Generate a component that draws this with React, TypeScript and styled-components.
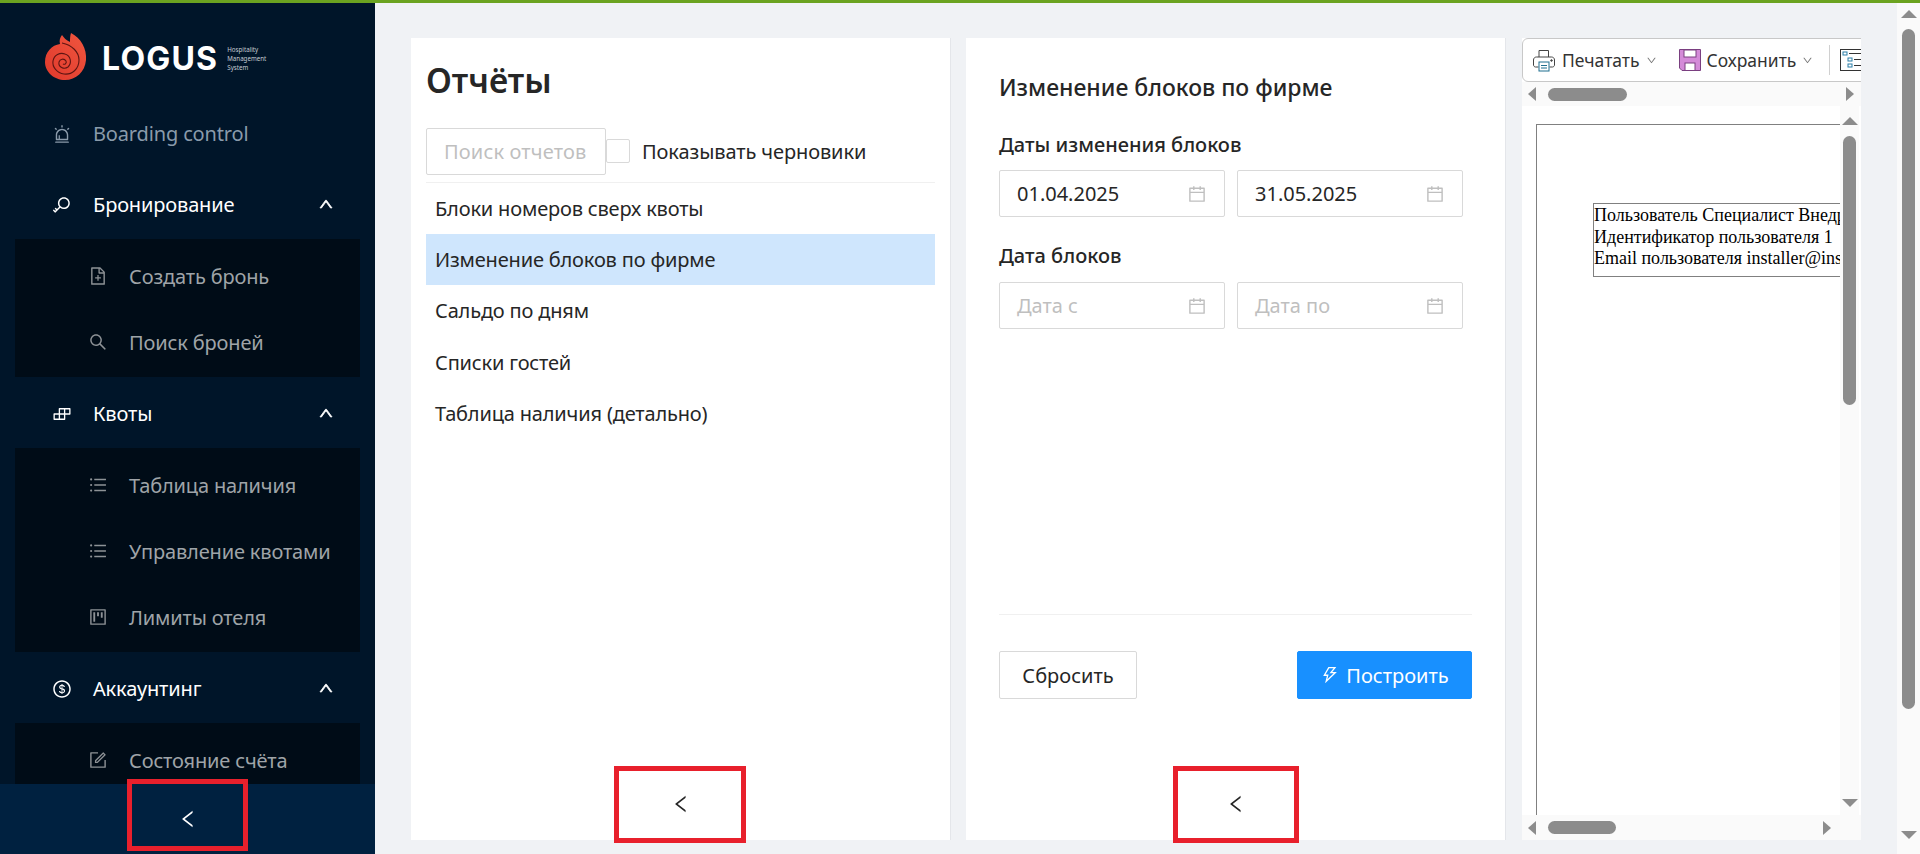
import React from 'react';
import styled, { createGlobalStyle } from 'styled-components';
import {
  AiOutlineAlert, AiOutlineKey, AiOutlineUp, AiOutlineFileAdd, AiOutlineSearch, AiOutlineBuild,
  AiOutlineUnorderedList, AiOutlineProject, AiOutlineDollar, AiOutlineForm, AiOutlineLeft,
  AiOutlineCalendar, AiOutlineThunderbolt, AiOutlineDown,
} from 'react-icons/ai';

const Global = createGlobalStyle`
  html, body { margin: 0; padding: 0; height: 100%; overflow: hidden; background: #f0f2f5; }
  * { box-sizing: border-box; }
  body { font-family: "Noto Sans", "Open Sans", Arial, sans-serif; color: #262626; }
`;

const Page = styled.div`
  width: 1920px; height: 854px; display: flex; flex-direction: column; overflow: hidden;
`;
const TopLine = styled.div`height: 3px; background: #6ba320; flex: none;`;
const Shell = styled.div`flex: 1; display: flex; min-height: 0;`;

const Sidebar = styled.aside`
  width: 375px; flex: none; background: #001529; display: flex; flex-direction: column;
`;
const SideScroll = styled.div`flex: 1; overflow: hidden; min-height: 0;`;
const LogoRow = styled.div`height: 94px; padding: 29px 0 0 45px; display: flex; align-items: flex-start;`;
const LogoWord = styled.span`
  font-family: Inter, sans-serif; font-weight: 700; font-size: 32px; line-height: 40px; color: #fff;
  margin-left: 15px; margin-top: 7px; letter-spacing: 1.2px;
`;
const LogoTag = styled.span`
  font-family: "Noto Sans", sans-serif; font-size: 6.2px; line-height: 9px; color: #c5ccd3; margin: 13px 0 0 9px;
`;
const TopRow = styled.div<{ $dim?: boolean }>`
  height: 71px; display: flex; align-items: center; padding: 2px 41px 0 52px; font-size: 20px; letter-spacing: -0.15px;
  color: ${p => (p.$dim ? '#8a9bab' : '#fff')};
  & > svg:first-child { font-size: 20px; flex: none; margin-right: 21px; }
`;
const Chevron = styled(AiOutlineUp)`margin: -2px 0 0 auto; font-size: 16px; stroke-width: 50; color: #fff;`;
const SubBlock = styled.div`margin: 0 15px; background: #000c17; padding: 4px 0 2px;`;
const SubRow = styled.div`
  height: 66px; display: flex; align-items: center; padding-left: 73px; font-size: 20px; letter-spacing: -0.15px; color: #9fa4a8;
  & > svg { font-size: 20px; flex: none; margin-right: 21px; color: #8d9296; }
`;
const Trigger = styled.div`
  height: 70px; flex: none; background: #002140; color: #fff; display: flex; align-items: center;
  justify-content: center; position: relative; font-size: 22px;
`;
const Frame = styled.div<{ $w: number; $top: number; $bottom: number; $shift?: number }>`
  position: absolute; left: 50%; margin-left: ${p => -p.$w / 2 + (p.$shift ?? 0)}px; width: ${p => p.$w}px;
  top: ${p => p.$top}px; bottom: ${p => p.$bottom}px; border: 5px solid #e8202c; pointer-events: none;
`;

const Main = styled.main`
  flex: 1; min-width: 0; display: flex; gap: 15px; padding: 35px 36px 14px;
`;
const Panel = styled.section`
  width: 540px; flex: none; background: #fff; display: flex; flex-direction: column;
  border-right: 1px solid #e4e6ea;
`;
const ListArea = styled.div`flex: 1; padding: 0 15px; min-height: 0;`;
const Title = styled.h1`
  margin: 0; font-size: 33.5px; line-height: 40px; font-weight: 600; color: #262626; padding: 22px 0 0;
`;
const Filter = styled.div`
  margin-top: 28px; height: 55px; padding-bottom: 8px; display: flex; align-items: center; border-bottom: 1px solid #f0f0f0;
`;
const SearchBox = styled.div`
  width: 180px; height: 47px; border: 1px solid #d9d9d9; border-radius: 2px; display: flex; align-items: center;
  padding-left: 17px; font-size: 20px; letter-spacing: 0.15px; color: #bfbfbf;
`;
const CheckBox = styled.span`
  width: 24px; height: 24px; border: 1px solid #d9d9d9; border-radius: 2px; margin-right: 12px; flex: none;
`;
const CheckText = styled.span`font-size: 20px; letter-spacing: -0.1px; color: #262626;`;
const ReportItem = styled.div<{ $active?: boolean }>`
  height: 51.2px; display: flex; align-items: center; padding-left: 9px; font-size: 20px; letter-spacing: -0.17px; color: #262626;
  background: ${p => (p.$active ? '#cfe6fd' : 'transparent')};
`;
const PanelFoot = styled.div`
  height: 72px; flex: none; position: relative; display: flex; align-items: center; justify-content: center;
  font-size: 22px; color: #262626;
`;
const FormArea = styled.div`flex: 1; padding: 0 33px; min-height: 0; display: flex; flex-direction: column;`;
const FormTitle = styled.h2`margin: 0; padding-top: 31px; font-size: 23px; line-height: 36px; font-weight: 500; color: #262626;`;
const FieldLabel = styled.div<{ $gap: number }>`
  margin-top: ${p => p.$gap}px; font-size: 20px; line-height: 28px; font-weight: 500; color: #262626;
`;
const DateRow = styled.div<{ $gap: number }>`display: flex; gap: 12px; margin-top: ${p => p.$gap}px;`;
const DateBox = styled.div<{ $empty?: boolean }>`
  width: 226px; height: 47px; border: 1px solid #d9d9d9; border-radius: 2px; display: flex; align-items: center;
  padding: 0 17px; font-size: 20px; color: ${p => (p.$empty ? '#bfbfbf' : '#262626')};
  & > svg { margin-left: auto; font-size: 20px; color: #bfbfbf; }
`;
const Spacer = styled.div`flex: 1;`;
const ButtonBar = styled.div`
  border-top: 1px solid #f0f0f0; padding-top: 36px; height: 154px; display: flex; justify-content: space-between; align-items: flex-start;
`;
const Button = styled.div<{ $primary?: boolean }>`
  height: 48px; display: flex; align-items: center; justify-content: center; font-size: 20px; border-radius: 2px;
  width: ${p => (p.$primary ? '175px' : '138px')};
  background: ${p => (p.$primary ? '#1890ff' : '#fff')};
  color: ${p => (p.$primary ? '#fff' : '#262626')};
  border: 1px solid ${p => (p.$primary ? '#1890ff' : '#d9d9d9')};
  & > svg { font-size: 20px; margin-right: 6px; }
`;

const Viewer = styled.section`
  width: 339px; flex: none; margin-left: 1px; background: #fff; display: flex; flex-direction: column; overflow: hidden;
`;
const Toolbar = styled.div`
  height: 44px; flex: none; width: 420px; border: 1px solid #c8c8c8; border-radius: 6px; background: #fff;
  display: flex; align-items: center; padding-left: 9px; font-family: "Noto Sans", sans-serif; font-size: 17.5px; color: #333;
`;
const ToolBtn = styled.div<{ $gap: number }>`
  display: flex; align-items: center; margin-right: ${p => p.$gap}px;
  & > svg:first-child { margin-right: 6px; }
  & > svg:last-child { margin-left: 6px; font-size: 11px; color: #777; }
`;
const ToolSep = styled.div`width: 1px; height: 30px; background: #d0d0d0; margin-right: 10px;`;
const HBar = styled.div<{ $h: number }>`
  height: ${p => p.$h}px; flex: none; background: #fafafa; display: flex; align-items: center; padding-left: 6px;
`;
const ArrowH = styled.span<{ $right?: boolean }>`
  width: 0; height: 0; border-top: 7px solid transparent; border-bottom: 7px solid transparent;
  ${p => (p.$right ? 'border-left: 8px solid #8c8c8c;' : 'border-right: 8px solid #8c8c8c;')}
`;
const ThumbH = styled.span<{ $w: number; $gapR: number }>`
  width: ${p => p.$w}px; height: 13px; border-radius: 7px; background: #8c8c8c; margin: 0 ${p => p.$gapR}px 0 12px;
`;
const ViewerBody = styled.div`flex: 1; min-height: 0; display: flex;`;
const DocArea = styled.div`flex: 1; min-width: 0; overflow: hidden; padding: 18px 0 0 14px; background: #fff;`;
const DocPage = styled.div`
  width: 600px; height: 800px; border-left: 1px solid #808080; border-top: 1px solid #808080; padding: 78px 0 0 56px;
`;
const DocBox = styled.div`
  width: 480px; height: 74px; border: 1px solid #808080; padding: 1px 0 0;
  font-family: "Liberation Serif", "Times New Roman", serif; font-size: 18px; line-height: 21.5px; color: #000; white-space: nowrap;
`;
const VBar = styled.div<{ $w: number }>`
  width: ${p => p.$w}px; flex: none; background: #fafafa; display: flex; flex-direction: column; align-items: center;
`;
const ArrowV = styled.span<{ $down?: boolean; $top?: number }>`
  width: 0; height: 0; border-left: 8px solid transparent; border-right: 8px solid transparent;
  margin-top: ${p => p.$top ?? 0}px;
  ${p => (p.$down ? 'border-top: 8px solid #8c8c8c;' : 'border-bottom: 8px solid #8c8c8c;')}
`;
const ThumbV = styled.span<{ $h: number; $top: number; $bottom: number }>`
  width: 13px; height: ${p => p.$h}px; border-radius: 7px; background: #8c8c8c;
  margin: ${p => p.$top}px 0 ${p => p.$bottom}px;
`;
const RightGap = styled.div`width: 2px; flex: none; background: #fff;`;
const PageBar = styled.div`
  width: 23px; flex: none; background: #fafafa; display: flex; flex-direction: column; align-items: center; padding-top: 7px;
`;

const LogoMark = () => (
  <svg width="42" height="48" viewBox="0 0 42 48">
    <defs>
      <linearGradient id="lg" x1="0" y1="1" x2="1" y2="0">
        <stop offset="0" stopColor="#e0392c" />
        <stop offset="1" stopColor="#f0563f" />
      </linearGradient>
    </defs>
    <path fill="url(#lg)" d="M26 1C36 6 42 17 41 28C40 40 31 48 20 48C9 48 0 40 0 30C0 20 7 13 15 12C14 8 15 6 17 3C19 6 21 8 25 10C25 7 25 4 26 1Z" />
    <path fill="none" stroke="#5e1512" strokeWidth="1.1" d="M17 11C27 13 34 20 34 28C34 37 27 43 19 42C12 41 7 35 8 29C9 23 15 20 20 22C26 24 27 31 23 35C19 38 13 35 14 30C15 27 19 26 21 29C22 31 20 33 18 32" />
  </svg>
);

const PrinterIcon = () => (
  <svg width="24" height="24" viewBox="0 0 24 24" fill="none" stroke="#444" strokeWidth="1">
    <path d="M7 9V2.5H16.5V9" />
    <path d="M6.5 19H3.5C2.5 19 1.5 18 1.5 17V12C1.5 10 3 9 4.5 9H19.5C21 9 22.5 10 22.5 12V17C22.5 18 21.5 19 20.5 19H17.5" />
    <rect x="7" y="14" width="10" height="9" fill="#fff" stroke="#1f6f8f" />
    <path d="M9 17.5H15M9 20H15" stroke="#1f6f8f" />
    <circle cx="19.5" cy="12.5" r="0.8" fill="#444" />
  </svg>
);
const SaveIcon = () => (
  <svg width="22" height="22" viewBox="0 0 22 22">
    <path d="M0.5 0.5H21.5V21.5H3L0.5 19Z" fill="#d48ad8" stroke="#7a3f80" />
    <rect x="5" y="1" width="12" height="7" fill="#fff" stroke="#7a3f80" />
    <rect x="6" y="14" width="10" height="7.5" fill="#fff" stroke="#7a3f80" />
  </svg>
);
const TreeIcon = () => (
  <svg width="24" height="22" viewBox="0 0 24 22" fill="none" stroke="#333" strokeWidth="1">
    <rect x="0.5" y="0.5" width="23" height="21" />
    <rect x="3" y="3" width="4" height="3" stroke="#2a7fa8" />
    <rect x="8" y="9" width="4" height="3" stroke="#2a7fa8" />
    <rect x="8" y="15" width="4" height="3" stroke="#2a7fa8" />
    <path d="M9 4.5H23M14 10.5H23M14 16.5H23" />
  </svg>
);

export default function App() {
  return (
    <Page>
      <Global />
      <TopLine />
      <Shell>
        <Sidebar>
          <SideScroll>
            <LogoRow>
              <LogoMark />
              <LogoWord>LOGUS</LogoWord>
              <LogoTag>Hospitality<br />Management<br />System</LogoTag>
            </LogoRow>
            <TopRow $dim><AiOutlineAlert />Boarding control</TopRow>
            <TopRow><AiOutlineKey />Бронирование<Chevron /></TopRow>
            <SubBlock>
              <SubRow><AiOutlineFileAdd />Создать бронь</SubRow>
              <SubRow><AiOutlineSearch />Поиск броней</SubRow>
            </SubBlock>
            <TopRow><AiOutlineBuild />Квоты<Chevron /></TopRow>
            <SubBlock>
              <SubRow><AiOutlineUnorderedList />Таблица наличия</SubRow>
              <SubRow><AiOutlineUnorderedList />Управление квотами</SubRow>
              <SubRow><AiOutlineProject />Лимиты отеля</SubRow>
            </SubBlock>
            <TopRow><AiOutlineDollar />Аккаунтинг<Chevron /></TopRow>
            <SubBlock>
              <SubRow><AiOutlineForm />Состояние счёта</SubRow>
            </SubBlock>
          </SideScroll>
          <Trigger>
            <AiOutlineLeft />
            <Frame $w={121} $top={-5} $bottom={3} />
          </Trigger>
        </Sidebar>
        <Main>
          <Panel>
            <ListArea>
              <Title>Отчёты</Title>
              <Filter>
                <SearchBox>Поиск отчетов</SearchBox>
                <CheckBox />
                <CheckText>Показывать черновики</CheckText>
              </Filter>
              <ReportItem>Блоки номеров сверх квоты</ReportItem>
              <ReportItem $active>Изменение блоков по фирме</ReportItem>
              <ReportItem>Сальдо по дням</ReportItem>
              <ReportItem>Списки гостей</ReportItem>
              <ReportItem>Таблица наличия (детально)</ReportItem>
            </ListArea>
            <PanelFoot>
              <AiOutlineLeft />
              <Frame $w={132} $top={-2} $bottom={-3} $shift={-1} />
            </PanelFoot>
          </Panel>
          <Panel>
            <FormArea>
              <FormTitle>Изменение блоков по фирме</FormTitle>
              <FieldLabel $gap={26}>Даты изменения блоков</FieldLabel>
              <DateRow $gap={11}>
                <DateBox>01.04.2025<AiOutlineCalendar /></DateBox>
                <DateBox>31.05.2025<AiOutlineCalendar /></DateBox>
              </DateRow>
              <FieldLabel $gap={25}>Дата блоков</FieldLabel>
              <DateRow $gap={12}>
                <DateBox $empty>Дата с<AiOutlineCalendar /></DateBox>
                <DateBox $empty>Дата по<AiOutlineCalendar /></DateBox>
              </DateRow>
              <Spacer />
              <ButtonBar>
                <Button>Сбросить</Button>
                <Button $primary><AiOutlineThunderbolt />Построить</Button>
              </ButtonBar>
            </FormArea>
            <PanelFoot>
              <AiOutlineLeft />
              <Frame $w={126} $top={-2} $bottom={-3} />
            </PanelFoot>
          </Panel>
          <Viewer>
            <Toolbar>
              <ToolBtn $gap={22}><PrinterIcon />Печатать<AiOutlineDown /></ToolBtn>
              <ToolBtn $gap={16}><SaveIcon />Сохранить<AiOutlineDown /></ToolBtn>
              <ToolSep />
              <TreeIcon />
            </Toolbar>
            <HBar $h={24}>
              <ArrowH />
              <ThumbH $w={79} $gapR={219} />
              <ArrowH $right />
            </HBar>
            <ViewerBody>
              <DocArea>
                <DocPage>
                  <DocBox>
                    Пользователь Специалист Внедрения<br />
                    Идентификатор пользователя 1<br />
                    Email пользователя installer@inspirationpms.com
                  </DocBox>
                </DocPage>
              </DocArea>
              <VBar $w={19}>
                <ArrowV $top={11} />
                <ThumbV $h={269} $top={11} $bottom={394} />
                <ArrowV $down />
              </VBar>
              <RightGap />
            </ViewerBody>
            <HBar $h={25}>
              <ArrowH />
              <ThumbH $w={68} $gapR={207} />
              <ArrowH $right />
            </HBar>
          </Viewer>
        </Main>
        <PageBar>
          <ArrowV />
          <ThumbV $h={680} $top={11} $bottom={122} />
          <ArrowV $down />
        </PageBar>
      </Shell>
    </Page>
  );
}
